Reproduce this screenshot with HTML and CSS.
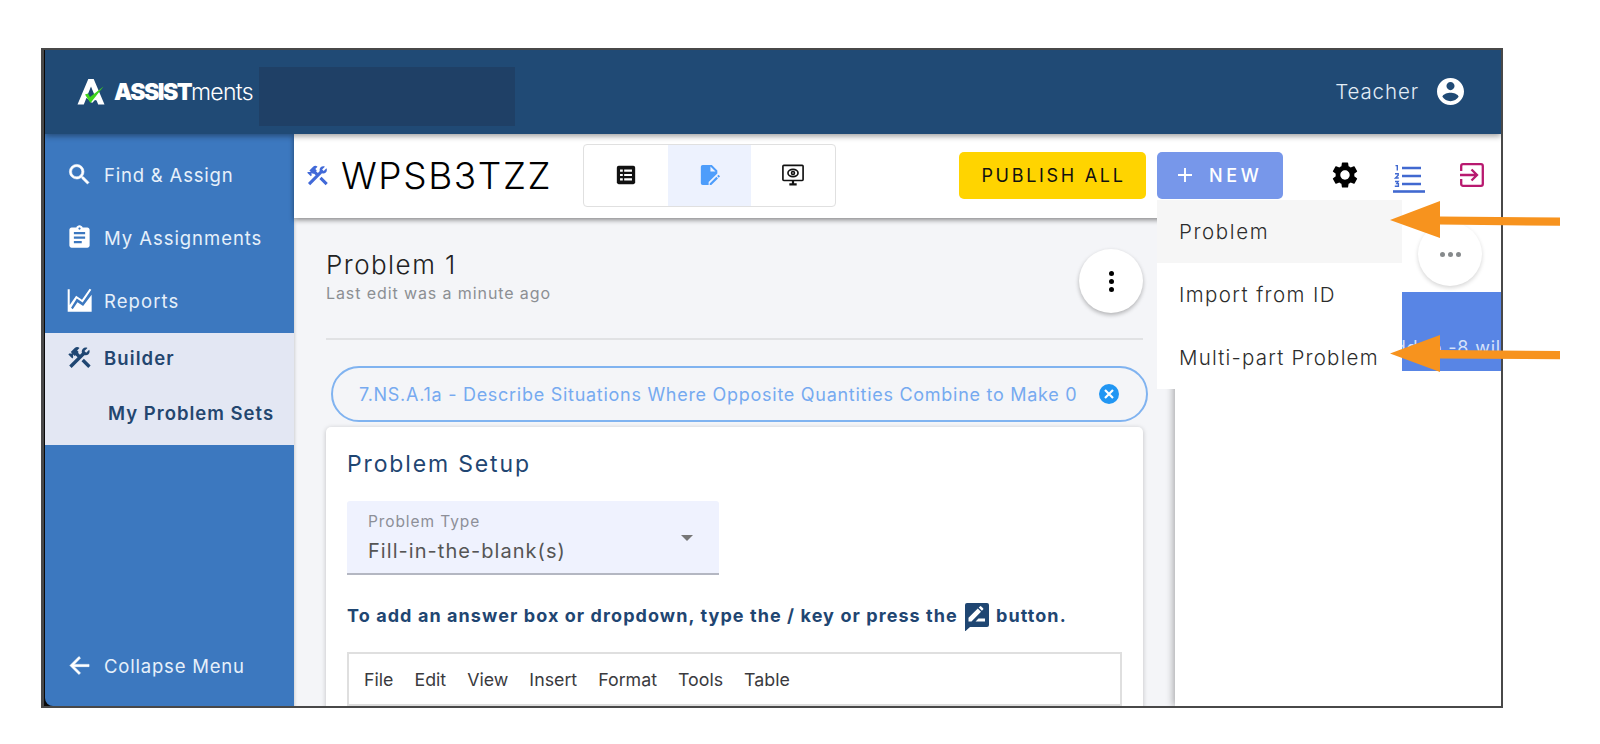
FILE: index.html
```html
<!DOCTYPE html>
<html lang="en">
<head>
<meta charset="utf-8">
<title>ASSISTments Builder</title>
<link rel="stylesheet" href="styles.css">
</head>
<body>
<svg class="defs" aria-hidden="true">
  <symbol id="tools" viewBox="0 0 24 24">
    <path d="M13.78 15.3 19.78 21.3 21.89 19.14 15.89 13.14ZM17.5 10.1C17.11 10.1 16.69 10.05 16.36 9.91L4.97 21.25 2.86 19.14 10.27 11.74 8.5 9.96 7.78 10.66 6.33 9.25V12.11L5.63 12.81 2.11 9.25 2.81 8.55H5.62L4.22 7.14 7.78 3.58C8.95 2.41 10.83 2.41 12 3.58L9.89 5.74 11.3 7.14 10.59 7.85 12.38 9.63 14.2 7.75C14.06 7.42 14 7 14 6.63 14 4.66 15.56 3.11 17.5 3.11 18.09 3.11 18.61 3.25 19.08 3.53L16.41 6.2 17.91 7.7 20.58 5.03C20.86 5.5 21 6 21 6.63 21 8.55 19.45 10.1 17.5 10.1Z"/>
  </symbol>
</svg>
<div class="frame">
  <header class="topbar">
    <svg class="logo" viewBox="0 0 28 26"><path fill="#fff" d="M11.300 0h5.400L27.500 25.500h-6.300L14 7.500 6.800 25.500H.5z"/><path fill="#fff" d="M8 18h12l2 4-4-1-3 3-4-4z"/><path fill="#1f4672" d="M14 9.500l2.500 5-2.500 2-2.500-2z"/><path fill="#3fd31c" d="M8 15.500l3-1 2 3.500L26.500 7.500 13.500 24z"/></svg>
    <div class="brand"><b>ASSIST</b><span>ments</span></div>
    <div class="redacted"></div>
    <div class="user">Teacher
      <svg viewBox="2 2 20 20"><path fill="#fff" d="M12 2C6.480 2 2 6.480 2 12s4.480 10 10 10 10-4.480 10-10S17.520 2 12 2zm0 3c1.660 0 3 1.340 3 3s-1.340 3-3 3-3-1.340-3-3 1.340-3 3-3zm0 14.200c-2.500 0-4.710-1.280-6-3.220.030-1.990 4-3.080 6-3.080s5.970 1.090 6 3.080c-1.290 1.940-3.500 3.220-6 3.220z"/></svg>
    </div>
  </header>
  <div class="body">
    <nav class="side">
      <a class="item"><svg viewBox="0 0 24 24"><path stroke="#fff" stroke-width=".5" d="M15.500 14h-.790l-.280-.270A6.471 6.471 0 0 0 16 9.500 6.500 6.500 0 1 0 9.500 16c1.610 0 3.090-.590 4.230-1.570l.270.280v.790l5 4.990L20.490 19l-4.990-5zm-6 0C7.010 14 5 11.990 5 9.500S7.010 5 9.500 5 14 7.010 14 9.500 11.990 14 9.500 14z"/></svg><span class="t-find">Find &amp; Assign</span></a>
      <a class="item"><svg viewBox="0 0 24 24"><path d="M19 3h-4.180C14.400 1.840 13.300 1 12 1s-2.400.840-2.820 2H5c-1.100 0-2 .900-2 2v14c0 1.100.900 2 2 2h14c1.100 0 2-.900 2-2V5c0-1.100-.900-2-2-2zm-7 0c.550 0 1 .450 1 1s-.450 1-1 1-1-.450-1-1 .450-1 1-1zm2 14H7v-2h7v2zm3-4H7v-2h10v2zm0-4H7V7h10v2z"/></svg><span class="t-assign">My Assignments</span></a>
      <a class="item"><svg viewBox="0 0 24 24"><path d="M1.500 2H3.300V16L9 7.800l5.200 3.600L21 1.500 22.500 2.500 14.800 13.700 9.600 10.200 4.500 18.500 6 19.800 10.200 13.500l5 3.300 7.600-10V22H1.500z"/></svg><span class="t-reports">Reports</span></a>
      <div class="active">
        <a class="item"><svg viewBox="0 0 24 24"><use href="#tools"/></svg><span class="t-builder">Builder</span></a>
        <a class="item sub"><span class="t-sets">My Problem Sets</span></a>
      </div>
      <a class="item collapse"><svg viewBox="0 0 24 24"><path stroke="#fff" stroke-width=".5" d="M20.500 11H7.330l5.590-5.590L11.500 4l-8 8 8 8 1.410-1.410L7.330 13H20.500z"/></svg><span class="t-collapse">Collapse Menu</span></a>
    </nav>
    <div class="work">
      <div class="toolbar">
        <svg class="toolicon" viewBox="0 0 24 24"><use href="#tools"/></svg>
        <h1>WPSB3TZZ</h1>
        <div class="seg">
          <span><svg viewBox="0 0 24 24"><path fill="#111" d="M4 2h16a2 2 0 0 1 2 2v16a2 2 0 0 1-2 2H4a2 2 0 0 1-2-2V4a2 2 0 0 1 2-2z"/><path fill="#fff" d="M5.500 6h3v2.400h-3zm4.500 0h8.500v2.400H10zM5.500 10.800h3v2.400h-3zm4.500 0h8.500v2.400H10zM5.500 15.600h3V18h-3zm4.500 0h8.500V18H10z"/></svg></span>
          <span class="on"><svg viewBox="0 0 24 24"><path fill="#4d9dfb" d="M4 1h10l6 6v3.400L10.500 19.500V23H4a2 2 0 0 1-2-2V3a2 2 0 0 1 2-2zm8.500 1.800v5.400H18zM21.300 11.700l1.700 1.700-1.500 1.500-1.700-1.700zM19 14l1.700 1.700-7.300 7.300h-1.700v-1.700z"/></svg></span>
          <span><svg viewBox="0 0 24 24" fill="none" stroke="#111" stroke-width="1.800"><rect x="1" y="1.500" width="22" height="16.500" rx="1"/><path d="M12 18v4M8 22.300h8" stroke-width="2.400"/><ellipse cx="12" cy="9.800" rx="5.500" ry="3.900"/><circle cx="12" cy="9.800" r="1.600"/></svg></span>
        </div>
        <button class="publish"><span>PUBLISH ALL</span></button>
        <div class="newwrap">
          <button class="new"><svg viewBox="0 0 14 14"><path d="M7 0v14M0 7h14" stroke="#fff" stroke-width="1.900"/></svg><span>NEW</span></button>
          <div class="menu">
            <div class="hover"><span class="m1">Problem</span></div>
            <div><span class="m2">Import from ID</span></div>
            <div><span class="m3">Multi-part Problem</span></div>
          </div>
        </div>
        <svg class="gear" viewBox="2 2 20 20"><path d="M19.140 12.940c.040-.300.060-.610.060-.940 0-.320-.020-.640-.070-.940l2.030-1.580a.490.490 0 0 0 .120-.610l-1.920-3.320a.488.488 0 0 0-.590-.220l-2.390.960c-.500-.380-1.030-.700-1.620-.940l-.360-2.540a.484.484 0 0 0-.480-.410h-3.840c-.240 0-.430.170-.470.410l-.360 2.540c-.590.240-1.130.570-1.620.940l-2.390-.960c-.220-.080-.470 0-.590.220L2.740 8.870c-.120.210-.080.470.120.610l2.030 1.580c-.050.300-.090.630-.090.940s.020.640.070.940l-2.030 1.580a.490.490 0 0 0-.120.610l1.920 3.320c.120.220.370.290.590.220l2.390-.960c.500.380 1.030.700 1.620.940l.360 2.540c.050.240.240.410.480.410h3.840c.240 0 .440-.170.470-.410l.360-2.540c.590-.240 1.130-.560 1.620-.940l2.390.960c.220.080.470 0 .590-.220l1.920-3.320c.120-.220.070-.470-.120-.610l-2.010-1.580zM12 15.600c-1.980 0-3.600-1.620-3.600-3.600s1.620-3.600 3.600-3.600 3.600 1.620 3.600 3.600-1.620 3.600-3.600 3.600z"/></svg>
        <svg class="list" viewBox="0 0 32 30" fill="none" stroke="#4169d0"><path d="M9 5h19M9 13h19M9 21h19" stroke-width="2.600"/><path d="M0 28.500h32" stroke-width="2.600"/><path d="M2.500 2.600h1.800v4.800M2 10.800h3.200v1.500L2.500 15h3.300M2 18.500h3.200L3.800 20.600h1.600v2.600H1.800" stroke-width="1.400"/></svg>
        <svg class="exit" viewBox="0 0 24 24" fill="none" stroke="#b8196f" stroke-width="2.300"><path d="M1.200 8V3a1.800 1.800 0 0 1 1.800-1.800h18a1.800 1.800 0 0 1 1.800 1.800v18a1.800 1.800 0 0 1-1.800 1.800H3a1.800 1.800 0 0 1-1.800-1.800v-5M0 12h16.500M11.500 6.500 17 12l-5.500 5.500"/></svg>
      </div>
      <div class="columns">
        <main class="main">
          <div class="phead">
            <div><h2>Problem 1</h2><p>Last edit was a minute ago</p></div>
            <div class="round"><i></i><i></i><i></i></div>
          </div>
          <div class="chip"><span>7.NS.A.1a - Describe Situations Where Opposite Quantities Combine to Make 0</span>
            <svg viewBox="0 0 20 20"><circle cx="10" cy="10" r="10" fill="#2196f3"/><path d="M6 6l8 8M14 6l-8 8" stroke="#fff" stroke-width="2.200"/></svg></div>
          <section class="card">
            <h3>Problem Setup</h3>
            <div class="select"><div><label>Problem Type</label><strong>Fill-in-the-blank(s)</strong></div><b class="caret"></b></div>
            <div class="hint"><span class="h-a">To add an answer box or dropdown, type the / key or press the</span>
              <svg viewBox="0 0 24 28"><path fill="#1f4672" d="M2 0h20a2 2 0 0 1 2 2v20a2 2 0 0 1-2 2H5l-5 4.500V2a2 2 0 0 1 2-2z"/><path fill="#fff" d="M3.500 18.500v-3.700L12.800 5.500l3.200 3.200-9.500 9.800zM13.700 4.600l1.200-1.200a1 1 0 0 1 1.400 0l1.800 1.800a1 1 0 0 1 0 1.400L16.900 7.800zM10.500 18.500l3-3H20v3z"/></svg>
              <span class="h-b">button.</span></div>
            <div class="editor">
              <div class="emenu"><span>File</span><span>Edit</span><span>View</span><span>Insert</span><span>Format</span><span>Tools</span><span>Table</span></div>
              <div class="etools"><i></i><i></i><i></i><i></i></div>
            </div>
          </section>
        </main>
        <aside class="panel">
          <div class="round dim"><i></i><i></i><i></i></div>
          <div class="problem"><span>add to -8 wil</span></div>
        </aside>
      </div>
    </div>
  </div>
</div>
<svg class="arrow first" viewBox="0 0 170 38"><path d="M0 19 50 0v15.500l120 1v8.300L50 23.500V37z"/></svg>
<svg class="arrow second" viewBox="0 0 170 38"><path d="M0 18.500 50 0v15l120 1v8.300L50 23.500V37z"/></svg>
</body>
</html>
```
FILE: styles.css
```css
* { box-sizing: border-box; }
body { margin: 0; width: 1600px; height: 744px; overflow: hidden; background: #fff; font-family: Inter, "Open Sans", sans-serif; color: #222; position: relative; }
h1, h2, h3, p { margin: 0; font-weight: 400; }
span, h1, h2, h3, p, label { white-space: nowrap; }
svg { display: block; flex: none; }
.defs { position: absolute; width: 0; height: 0; }
button { border: 0; font-family: inherit; }

.frame { width: 1462px; height: 660px; margin: 48px 0 0 41px; border: 2px solid #484848; border-left-width: 3px; background: #0a0a0a; padding-left: 1px; display: flex; flex-direction: column; overflow: hidden; }
.topbar { height: 84px; background: #204a75; display: flex; align-items: center; padding: 0 37px 0 32px; flex: none; box-shadow: 0 2px 6px rgba(0,0,0,.4); position: relative; z-index: 2; }
.logo { width: 28px; height: 26px; }
.brand { color: #fff; font-size: 23px; margin-left: 9px; width: 143px; display: flex; }
.brand b { font-weight: 900; letter-spacing: -1.500px; width: 77px; }
.brand span { font-weight: 300; letter-spacing: -.7px; }
.redacted { width: 256px; height: 59px; background: #1f4066; margin-left: 2px; margin-top: 8px; }
.user { margin: 0 0 2px auto; display: flex; align-items: center; gap: 18px; color: #e3edf6; font-size: 20.5px; letter-spacing: .9px; font-weight: 300; }
.user svg { width: 27px; height: 27px; }

.body { flex: 1; display: flex; min-height: 0; }
.side { width: 249px; background: #3c78bf; display: flex; flex-direction: column; padding-top: 9px; border-bottom-left-radius: 8px; flex: none; }
.item { height: 63px; display: flex; align-items: center; padding-left: 21px; gap: 11px; color: #e6f0fa; fill: #fff; font-size: 18.5px; letter-spacing: .8px; }
.item svg { width: 27px; height: 27px; }
.active { background: #e3e7f3; height: 112px; margin-top: 1px; color: #1f4672; }
.active .item { height: 49px; color: #23466f; fill: #1f4672; font-weight: 600; letter-spacing: 1.100px; }
.active .sub { padding-left: 63px; height: 62px; letter-spacing: 1px; }
.t-assign { letter-spacing: .950px; }
.t-reports { letter-spacing: 1.100px; }
.collapse { margin-top: auto; margin-bottom: 9px; }

.work { flex: 1; display: flex; flex-direction: column; background: #f4f5f8; min-width: 0; }
.toolbar { height: 84px; background: #fff; display: flex; align-items: center; padding: 0 0 2px 11px; flex: none; position: relative; z-index: 1; box-shadow: 0 2px 5px rgba(0,0,0,.45); }
.toolicon { width: 25px; height: 25px; fill: #4169d8; }
h1 { font-size: 37px; font-weight: 300; color: #000; width: 207px; margin-left: 11px; letter-spacing: 1.600px; }
.seg { margin-left: 35px; width: 253px; height: 63px; border: 1px solid #e0e0e0; border-radius: 4px; display: flex; }
.seg span { flex: 1; display: flex; align-items: center; justify-content: center; }
.seg .on { background: #edf2fe; }
.seg svg { width: 22px; height: 22px; }
.publish { margin-left: 123px; width: 187px; height: 47px; border-radius: 5px; background: #ffd400; font-size: 18px; letter-spacing: 2.700px; color: #111; padding: 0 0 0 2px; }
.newwrap { position: relative; margin-left: 11px; }
.new { width: 126px; height: 47px; border-radius: 5px; background: #7797ea; color: #fff; font-size: 18px; font-weight: 500; letter-spacing: 3.700px; display: flex; align-items: center; padding: 0 0 0 21px; gap: 17px; }
.new svg { width: 14px; height: 14px; }
.menu { position: absolute; left: 0; top: 48px; width: 245px; height: 189px; background: #fff; font-size: 20.500px; font-weight: 350; color: #2c2c2c; }
.menu div { height: 63px; display: flex; align-items: center; padding-left: 22px; }
.menu .hover { background: #f6f6f6; }
.m1 { letter-spacing: 1.600px; }
.m2 { letter-spacing: 1.400px; }
.m3 { letter-spacing: 1.200px; }
.gear { width: 26px; height: 26px; margin-left: 49px; }
.list { width: 32px; height: 30px; margin-left: 35px; margin-top: 6px; }
.exit { width: 24px; height: 24px; margin-left: 35px; }

.columns { flex: 1; display: flex; min-height: 0; }
.main { flex: 1; padding: 0 32px; box-shadow: inset 3px 0 3px -2px rgba(0,0,0,.15); }
.phead { height: 122px; border-bottom: 2px solid #e1e2e4; display: flex; justify-content: space-between; padding-top: 31px; }
h2 { font-size: 26px; font-weight: 300; line-height: 32px; color: #222; letter-spacing: 1.450px; }
.phead p { font-size: 16px; line-height: 25px; color: #8c8f93; letter-spacing: .9px; }
.round { width: 64px; height: 64px; border-radius: 50%; background: #fff; box-shadow: 0 2px 4px rgba(0,0,0,.28); display: flex; flex-direction: column; align-items: center; justify-content: center; gap: 3px; }
.round i { width: 5px; height: 5px; border-radius: 50%; background: #000; }
.chip { margin: 26px -5px 0 5px; height: 56px; border: 2px solid #80b3f0; border-radius: 28px; display: flex; align-items: center; padding-left: 26px; color: #76aaf0; font-size: 18px; }
.chip span { width: 718px; letter-spacing: .720px; }
.chip svg { width: 20px; height: 20px; margin-left: 22px; }
.card { margin-top: 5px; height: 320px; background: #fff; border-radius: 5px; box-shadow: 0 1px 5px rgba(0,0,0,.22); padding: 21px 21px 0; }
h3 { font-size: 23px; line-height: 32px; color: #1f4672; letter-spacing: 1.850px; }
.select { margin-top: 21px; width: 372px; height: 74px; background: #eff2fe; border-bottom: 2px solid #b4b7c2; display: flex; align-items: center; justify-content: space-between; padding: 2px 26px 0 21px; border-radius: 3px 3px 0 0; }
.select div { display: flex; flex-direction: column; }
.select label { font-size: 15.500px; line-height: 26px; color: #8d8f98; letter-spacing: .9px; }
.select strong { font-size: 20px; line-height: 32px; font-weight: 400; color: #555; letter-spacing: 1.050px; }
.caret { border: 6.500px solid transparent; border-top-color: #777; border-bottom: 0; }
.hint { display: flex; height: 30px; margin-top: 25px; align-items: center; font-size: 18px; font-weight: 700; color: #1f4672; letter-spacing: 1.080px; }
.hint svg { width: 24px; height: 28px; margin: 4px 7px 0 0; }
.h-a { width: 618px; }
.editor { margin-top: 22px; width: 775px; height: 80px; border: 2px solid #dfdfdf; }
.emenu { height: 50px; display: flex; align-items: center; gap: 21px; padding-left: 15px; font-size: 17.800px; color: #3a3a3e; }
.etools { height: 30px; border-top: 2px solid #ddd; background: #f3f3f3; display: flex; }
.etools i { border-right: 1px solid #bbb; width: 57px; }
.etools i:nth-child(2) { width: 317px; }
.etools i:nth-child(3) { width: 101px; }
.etools i:nth-child(4) { width: 147px; }

.panel { width: 326px; background: #fff; box-shadow: -2px 0 7px rgba(0,0,0,.3); display: flex; flex-direction: column; align-items: flex-end; padding-top: 4px; }
.dim { flex-direction: row; margin-right: 19px; box-shadow: 0 2px 4px rgba(0,0,0,.16); }
.dim i { background: #868a8c; }
.problem { margin-top: 6px; width: 100%; height: 79px; background: #5885e5; color: #d5e2fa; font-size: 18px; overflow: hidden; display: flex; justify-content: flex-end; padding-top: 45px; letter-spacing: .8px; }

.arrow { position: absolute; z-index: 5; left: 1390px; width: 170px; height: 38px; fill: #f7931e; }
.first { top: 201px; }
.second { top: 335px; }
```
